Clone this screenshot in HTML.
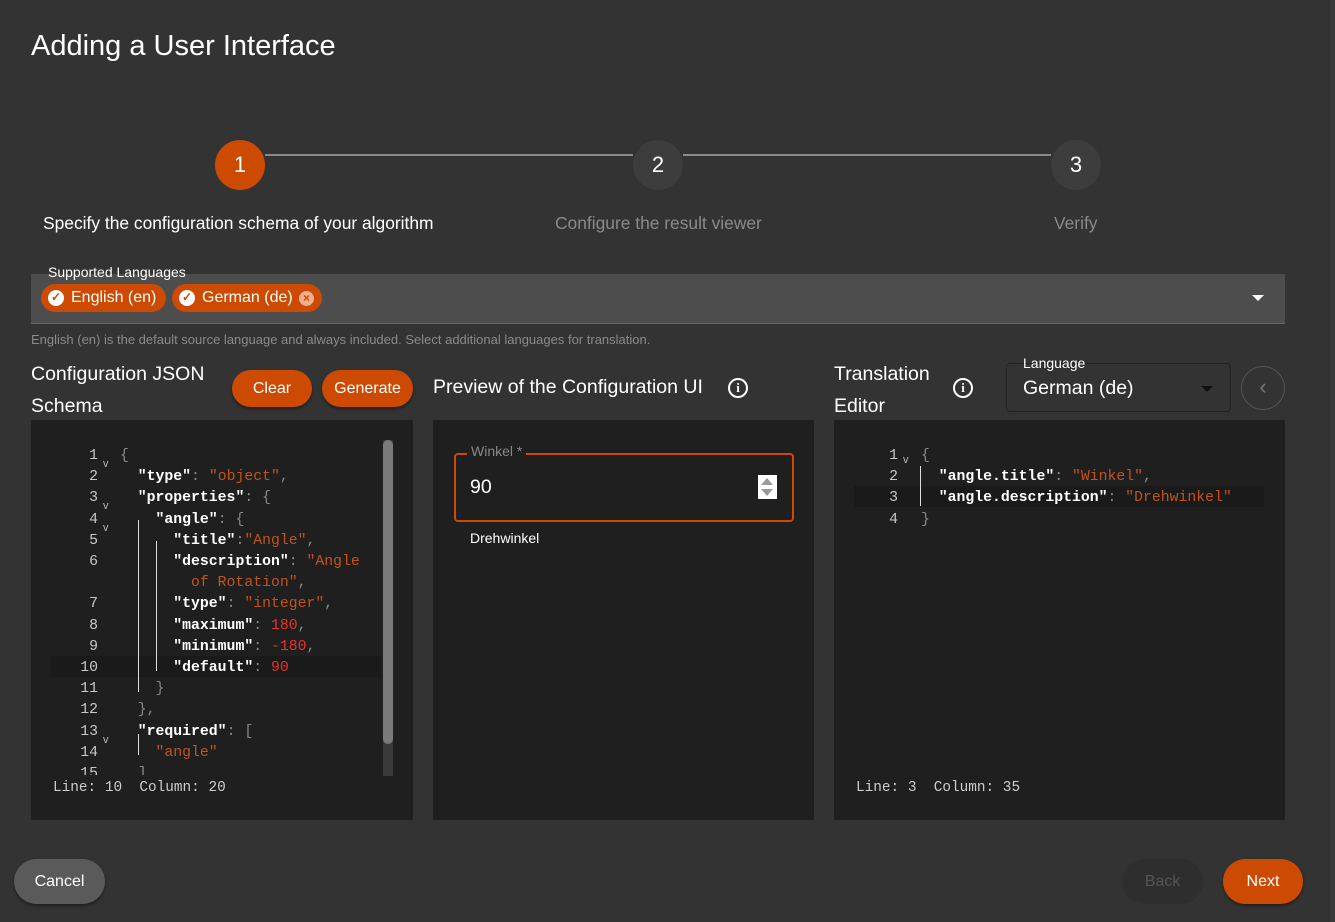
<!DOCTYPE html>
<html><head><meta charset="utf-8"><style>
*{box-sizing:border-box;margin:0;padding:0}
body{width:1335px;height:922px;background:#333;color:#fff;font-family:"Liberation Sans",sans-serif;position:relative;overflow:hidden}
.a{position:absolute}
.circ{position:absolute;width:50px;height:50px;border-radius:50%;text-align:center;line-height:50px;font-size:22px}
.pill{position:absolute;border-radius:20px;background:#cc4a02;color:#fff;font-size:16px;text-align:center;box-shadow:0 2px 3px rgba(0,0,0,.4)}
.chip{position:absolute;top:284px;height:28px;border-radius:14px;background:#cc4a02;font-size:16px;line-height:28px;padding-left:30px}
.chk{position:absolute;left:7px;top:6px;width:16px;height:16px;border-radius:50%;background:#fff}
.panel{position:absolute;top:420px;height:400px;background:#1f1f1f}
.code{font-family:"Liberation Mono","DejaVu Sans Mono",monospace;font-size:14.8px;white-space:pre;position:absolute;line-height:21px}
.ln{position:absolute;text-align:right;width:30px;color:#c8c8c8;font-family:"Liberation Mono",monospace;font-size:14.8px;overflow:hidden}
.k{color:#fff;font-weight:bold}.s{color:#c4521c}.n{color:#e8322a}.p{color:#888}
.info{position:absolute;width:20px;height:20px;border:2px solid #fff;border-radius:50%;font-size:13px;font-weight:bold;text-align:center;line-height:16px;font-family:"Liberation Serif",serif}
</style></head><body>
<div class="a" style="left:31px;top:30px;font-size:29px">Adding a User Interface</div>
<div class="a" style="left:265px;top:154px;width:368px;height:2px;background:#8a8a8a"></div>
<div class="a" style="left:683px;top:154px;width:368px;height:2px;background:#8a8a8a"></div>
<div class="circ" style="left:215px;top:140px;background:#cc4a02">1</div>
<div class="circ" style="left:633px;top:140px;background:#3d3d3d">2</div>
<div class="circ" style="left:1051px;top:140px;background:#3d3d3d">3</div>
<div class="a" style="left:43px;top:213px;font-size:17.4px">Specify the configuration schema of your algorithm</div>
<div class="a" style="left:555px;top:213px;font-size:17.4px;color:#8a8a8a">Configure the result viewer</div>
<div class="a" style="left:1054px;top:213px;font-size:17.4px;color:#8a8a8a">Verify</div>

<div class="a" style="left:31px;top:274px;width:1254px;height:50px;background:#4d4d4d;border-bottom:1px solid #666"></div>
<div class="a" style="left:48px;top:264px;font-size:14px">Supported Languages</div>
<div class="chip" style="left:41px;width:125px"><span class="chk"></span><span class="a" style="left:10px;top:-1px;color:#cc4a02;font-size:12px;font-weight:bold">✓</span>English (en)</div>
<div class="chip" style="left:172px;width:150px"><span class="chk"></span><span class="a" style="left:10px;top:-1px;color:#cc4a02;font-size:12px;font-weight:bold">✓</span>German (de)<span class="a" style="left:127px;top:7px;width:15px;height:15px;border-radius:50%;background:#f0b090;color:#cc4a02;font-size:12px;line-height:15px;text-align:center;font-weight:bold">×</span></div>
<div class="a" style="left:1252px;top:295px;width:0;height:0;border-left:6px solid transparent;border-right:6px solid transparent;border-top:6px solid #fff"></div>
<div class="a" style="left:31px;top:332px;font-size:13px;color:#8a8a8a">English (en) is the default source language and always included. Select additional languages for translation.</div>

<div class="a" style="left:31px;top:358px;font-size:19.5px;line-height:32px">Configuration JSON<br>Schema</div>
<div class="pill" style="left:232px;top:370px;width:80px;height:37px;line-height:37px">Clear</div>
<div class="pill" style="left:322px;top:370px;width:91px;height:37px;line-height:37px">Generate</div>
<div class="a" style="left:433px;top:376px;font-size:19.5px">Preview of the Configuration UI</div>
<div class="info" style="left:728px;top:378px">i</div>
<div class="a" style="left:834px;top:358px;font-size:19.5px;line-height:32px">Translation<br>Editor</div>
<div class="info" style="left:953px;top:378px">i</div>
<div class="a" style="left:1006px;top:363px;width:225px;height:49px;border:1px solid #222;border-radius:4px;background:#333"></div>
<div class="a" style="left:1023px;top:355px;font-size:14px">Language</div>
<div class="a" style="left:1023px;top:377px;font-size:19.5px">German (de)</div>
<div class="a" style="left:1201px;top:386px;border-left:6px solid transparent;border-right:6px solid transparent;border-top:6px solid #111"></div>
<div class="a" style="left:1241px;top:366px;width:44px;height:44px;border:1px solid #555;border-radius:50%;color:#777;text-align:center;line-height:40px;font-size:22px">‹</div>

<div class="panel" style="left:31px;width:382px">
 <div class="a" style="left:20px;top:236px;width:330px;height:21px;background:#1a1a1a"></div>
 <div class="a" style="left:352px;top:20px;width:10px;height:336px;background:#3a3a3a"></div>
 <div class="a" style="left:352px;top:20px;width:10px;height:304px;background:#7a7a7a;border-radius:5px"></div>
 <div class="a" style="left:107px;top:100px;width:1px;height:172px;background:#ddd"></div>
 <div class="a" style="left:125px;top:121px;width:1px;height:130px;background:#ddd"></div>
 <div class="a" style="left:107px;top:314px;width:1px;height:21px;background:#ddd"></div>
 <div class="ln" style="left:37px;top:26px;line-height:21.2px;height:329px">1<br>2<br>3<br>4<br>5<br>6<br>&nbsp;<br>7<br>8<br>9<br>10<br>11<br>12<br>13<br>14<br>15</div>
 <div class="a" style="left:72px;top:34px;font-size:11px;color:#bbb;line-height:21.2px">v<br><br>v<br>v<br><br><br><br><br><br><br><br><br><br>v</div>
 <div class="code" style="left:89px;top:26px;line-height:21.2px;height:329px;overflow:hidden"><span class="p">{</span>
  <span class="k">"type"</span><span class="p">: </span><span class="s">"object"</span><span class="p">,</span>
  <span class="k">"properties"</span><span class="p">: {</span>
    <span class="k">"angle"</span><span class="p">: {</span>
      <span class="k">"title"</span><span class="p">:</span><span class="s">"Angle"</span><span class="p">,</span>
      <span class="k">"description"</span><span class="p">: </span><span class="s">"Angle</span>
<span class="s">        of Rotation"</span><span class="p">,</span>
      <span class="k">"type"</span><span class="p">: </span><span class="s">"integer"</span><span class="p">,</span>
      <span class="k">"maximum"</span><span class="p">: </span><span class="n">180</span><span class="p">,</span>
      <span class="k">"minimum"</span><span class="p">: </span><span class="n">-180</span><span class="p">,</span>
      <span class="k">"default"</span><span class="p">: </span><span class="n">90</span>
    <span class="p">}</span>
  <span class="p">},</span>
  <span class="k">"required"</span><span class="p">: [</span>
    <span class="s">"angle"</span>
  <span class="p">]</span></div>
 <div class="code" style="left:22px;top:358px;color:#ccc;font-size:14.4px">Line: 10  Column: 20</div>
</div>

<div class="panel" style="left:433px;width:381px">
 <div class="a" style="left:21px;top:33px;width:340px;height:69px;border:2px solid #cc4a02;border-radius:4px"></div>
 <div class="a" style="left:34px;top:23px;padding:0 4px;background:#1f1f1f;font-size:14px;color:#888">Winkel *</div>
 <div class="a" style="left:37px;top:56px;font-size:19.5px">90</div>
 <div class="a" style="left:325px;top:55px;width:19px;height:24px;background:#fff"><div class="a" style="left:3px;top:3px;border-left:6px solid transparent;border-right:6px solid transparent;border-bottom:7px solid #999"></div><div class="a" style="left:3px;top:14px;border-left:6px solid transparent;border-right:6px solid transparent;border-top:7px solid #999"></div></div>
 <div class="a" style="left:37px;top:110px;font-size:14px">Drehwinkel</div>
</div>

<div class="panel" style="left:834px;width:451px">
 <div class="a" style="left:20px;top:66px;width:410px;height:21px;background:#1a1a1a"></div>
 <div class="a" style="left:86px;top:46px;width:1px;height:40px;background:#ddd"></div>
 <div class="ln" style="left:34px;top:26px;line-height:21.2px">1<br>2<br>3<br>4</div>
 <div class="a" style="left:69px;top:34px;font-size:11px;color:#bbb">v</div>
 <div class="code" style="left:87px;top:26px;line-height:21.2px"><span class="p">{</span>
  <span class="k">"angle.title"</span><span class="p">: </span><span class="s">"Winkel"</span><span class="p">,</span>
  <span class="k">"angle.description"</span><span class="p">: </span><span class="s">"Drehwinkel"</span>
<span class="p">}</span></div>
 <div class="code" style="left:22px;top:358px;color:#ccc;font-size:14.4px">Line: 3  Column: 35</div>
</div>

<div class="pill" style="left:14px;top:859px;width:91px;height:45px;line-height:45px;background:#5a5a5a;border-radius:23px">Cancel</div>
<div class="pill" style="left:1122px;top:859px;width:81px;height:45px;line-height:45px;background:#2e2e2e;color:#555;border-radius:23px;box-shadow:none">Back</div>
<div class="pill" style="left:1223px;top:859px;width:80px;height:45px;line-height:45px;border-radius:23px">Next</div>
<div class="a" style="left:1330px;top:0;width:5px;height:922px;background:#3a3a3a"></div>
</body></html>
